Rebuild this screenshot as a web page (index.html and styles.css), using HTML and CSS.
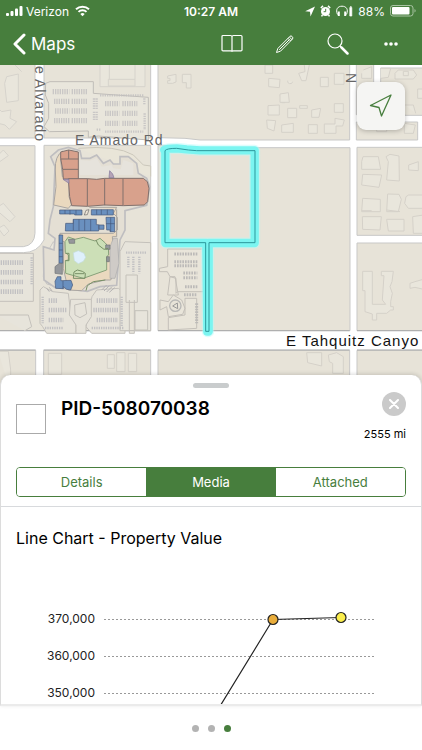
FILE: index.html
```html
<!DOCTYPE html>
<html lang="en">
  <head>
    <meta charset="utf-8">
    <meta name="viewport" content="width=device-width, initial-scale=1">
    <link rel="stylesheet" href="styles.css">
    <title>Maps</title>
  </head>
  <body>
    <header class="top-bar">
      <div class="status-row">
        <div class="status-left">
          <svg width="17" height="12" viewBox="0 0 17 12" fill="#fff"><rect x="0" y="8" width="3" height="3" rx="1"/><rect x="4.500" y="6" width="3" height="5" rx="1"/><rect x="9" y="3.500" width="3" height="7.500" rx="1"/><rect x="13.500" y="1" width="3" height="10" rx="1"/></svg>
          <span>Verizon</span>
          <svg class="wifi" width="15" height="12" viewBox="0 0 15 12" fill="none" stroke="#fff" stroke-width="2"><path d="M1 4.200a9.500 9.500 0 0 1 13 0M3.500 6.900a5.800 5.800 0 0 1 8 0"/><path d="M5.300 9a3.300 3.300 0 0 1 4.400 0L7.500 11.300z" fill="#fff" stroke="none"/></svg>
        </div>
        <div class="status-time">10:27 AM</div>
        <div class="status-right">
          <svg width="10" height="11" viewBox="0 0 10 11" fill="#fff"><path d="M10 .5L5.500 10.500 5 5.800.2 5.300z"/></svg>
          <svg width="11" height="12" viewBox="0 0 11 12"><circle cx="5.500" cy="6.500" r="4.500" fill="#fff"/><path d="M.8 3L3 .9M10.200 3L8 .9M2.500 10l-1 1.400M8.500 10l1 1.400" stroke="#fff" stroke-width="1.500"/><path d="M5.700 3.800v2.900H3.600" fill="none" stroke="#477e3d"/></svg>
          <svg width="17" height="12" viewBox="0 0 17 12" fill="none" stroke="#fff"><path d="M1.500 9.500C-.8 4 2 1.200 6 1.200S12.800 4 10.500 9.500"/><path d="M2.800 6.500v4.500M9.200 6.500v4.500" stroke-width="2"/><path d="M13.800 2.500h2v8.500h-2zM14 1.500h1.600" fill="#fff" stroke-opacity=".7"/></svg>
          <span>88%</span>
          <svg width="26" height="12" viewBox="0 0 26 12"><rect x=".5" y=".5" width="22.500" height="10.500" rx="2.500" fill="none" stroke="#a9c3a3"/><rect x="2" y="2" width="17.500" height="7.500" rx="1" fill="#fff"/><path d="M24.500 4c1.500.5 1.500 3 0 3.500z" fill="#a9c3a3"/></svg>
        </div>
      </div>
      <nav class="nav-row">
        <a class="back-link" href="#">
          <svg width="13" height="22" viewBox="0 0 13 22" fill="none" stroke="#fff" stroke-width="3" stroke-linecap="round" stroke-linejoin="round"><path d="M11 2L2 11l9 9"/></svg>
          Maps
        </a>
        <button class="nav-button" aria-label="Bookmarks">
          <svg width="22" height="20" viewBox="0 0 22 20" fill="none" stroke="#fff" stroke-width="1.200"><path d="M1 2.500Q1 1.500 2 1.500h7.500q1.500 0 1.500 1.300 0-1.300 1.500-1.300H20q1 0 1 1v13.500q0 .8-1 .8h-7.500q-1.300 0-1.500.8-.2-.8-1.500-.8H2q-1 0-1-.8zM11 2.500v15"/></svg>
        </button>
        <button class="nav-button" aria-label="Sketch">
          <svg width="20" height="20" viewBox="0 0 20 20" fill="none" stroke="#fff" stroke-linejoin="round"><path d="M1.500 18.500L2.800 14.500 15 2.300Q16 1.300 17.200 2.600T17.500 5L5.500 17.200zM13 4.300l2.700 2.700M14.300 3l2.700 2.700M4.200 15.800L14.300 5.700"/></svg>
        </button>
        <button class="nav-button" aria-label="Search">
          <svg width="22" height="22" viewBox="0 0 22 22" fill="none" stroke="#fff"><circle cx="8" cy="8" r="7" stroke-width="1.200"/><path d="M13 13l1.500 1.500" stroke-width="1.500"/><path d="M14.500 14.500l6 6" stroke-width="2.500" stroke-linecap="round"/></svg>
        </button>
        <button class="nav-button" aria-label="More">
          <svg width="14" height="4" viewBox="0 0 14 4" fill="#fff"><circle cx="2" cy="2" r="1.800"/><circle cx="7" cy="2" r="1.800"/><circle cx="12" cy="2" r="1.800"/></svg>
        </button>
      </nav>
    </header>

    <main>
      <div class="map">
        <svg class="map-svg" viewBox="0 65 422 324">
          <rect y="60" width="422" height="340" fill="#fff"/>
          <g transform="translate(0 60) scale(.33333)">
            <!-- city blocks -->
            <g fill="#e7e3d8" stroke="#c8c8c7" stroke-width="3">
              <path d="M-9 0H105V234H-9zM132 0H452V234H132zM474 0H1049V240H600L555 235 474 233zM-9 257H105V520Q103 556 70 560H-9z"/>
              <path d="M132 256H452V812H-9V578H70Q112 578 132 540zM474 256H520Q545 257 570 263H1050V812H474zM1071 262H1290V526H1071zM1071 549H1290V812H1071z"/>
              <path d="M1069 0H1121V164H1069zM1142 24H1290V166H1215V164H1142zM1069 186H1253V240H1069z"/>
              <path d="M-9 871H107V1000H-9zM131 871H452V1000H131zM474 871H1049V1000H474zM1071 871H1290V1000H1071z"/>
            </g>
            <path d="M-9 812H452M474 812H1049M1071 812H1290M-9 870H107M131 870H452M474 870H1049M1071 870H1290" stroke="#aaa" stroke-width="3"/>

            <!-- north west -->
            <g fill="#e9e6dc" stroke="#d6d3cc" stroke-width="3">
              <path d="M20 50L55 42V122L20 127 14 70zM-5 145L5 155 33 150 30 175 50 185 28 208 15 195-5 190zM45 15L65 35M-5 285L10 270 25 287-5 308zM300 0V80H435V0M325 58H405V78H325zM328 0V58M405 0V58"/>
              <path d="M-5 440L10 430 45 470 30 485-5 455M-5 505L12 495 27 513 12 528z"/>
              <path d="M137 70L150 65H280V100L445 112V240L295 228 265 232V213L148 215 132 200 146 175V130L136 105z" stroke="#c0bdb8"/>
              <path d="M132 595L160 545 170 560 165 605 180 650 170 680 140 672 130 650z" stroke="#c8c6c3"/>
            </g>
            <g stroke="#c2c0c1" stroke-dasharray="4 3" fill="none" opacity=".8">
              <path stroke-width="16" d="M158 95H208M215 95H262M162 124H208M215 124H262M165 153H208M215 153H262M162 182H208M215 182H262M315 131H358M367 131H412M315 160H358M367 160H412M315 190H358M367 190H412"/>
              <path stroke-width="7" d="M300 106H430M315 215H430M290 209H302M282 115V150M290 115V150M282 155V183M290 155V183M433 115V135M434 160V210"/>
            </g>

            <!-- museum grounds -->
            <path d="M235 265Q350 255 400 285L430 315 452 318V350" fill="#e9e5d8" stroke="#cbc7bb" stroke-width="3"/>
            <path d="M160 440L150 480 145 520 165 535 162 570 130 560 132 660 165 682 262 694 300 680 350 676 360 540 375 510V452L440 436 449 380 440 355 415 340 410 310 385 290H360V312H340L330 300 310 310 290 285 270 295H245L240 272 205 262 175 270 152 290 165 320z" fill="#e4dfd4" stroke="#bfbec0" stroke-width="5"/>
            <path d="M240 300L270 302 290 294 305 320 335 315 340 325 362 328 370 300 400 310V345H240z" fill="#e6e3dc"/>
            <path d="M188 273Q164 288 166 330L168 380 161 435 205 445 215 433 207 410V356L187 350 182 300zM268 442H350L340 460 352 472V510L340 520H180V540L192 545 190 625 205 690 245 692 265 672 315 660 332 660 345 635 337 530H350V448" fill="#ead9bf" stroke="#aaa6a2" stroke-width="3"/>
            <path d="M352 535L357 610 345 655 330 655 330 560 340 535z" fill="#cfcbc7" stroke="#aaa" stroke-width="2"/>
            <g fill="#d8a18c" stroke="#81706c" stroke-width="3">
              <path d="M182 295V276L206 270 235 276V357H190L188 328zM182 297H235M206 270V297M188 328H235"/>
              <path d="M205 356H262L290 358 314 355H430L442 365 447 385 443 425 433 435 370 437 313 435 262 439 215 437 209 410zM262 356V438M314 356V436M369 356V436"/>
            </g>
            <path d="M327 353L329 332 338 342 342 353zM189 358H207V370z" fill="#b5a3b7" stroke="#81769a" stroke-width="2"/>
            <g fill="#6a90bf" stroke="#45577a" stroke-width="2">
              <path d="M179 450H246V465H224V462H179zM195 450V462M210 450V464M228 450V464M274 449H340V465H274zM290 449V464M304 449V464M322 449V464M318 472H344V515H330V510H320zM318 491H344M332 472V514"/>
              <path d="M197 490H220V478H289V494H296V513H196zM220 478V511M237 478V512M254 478V512M272 478V513M297 495H312V508H297z"/>
              <path d="M177 525H188V610H177zM177 550H188M177 570H188M177 590H188M165 664L172 650H183V662L213 661 218 675 212 690 200 688 190 680V686L167 685zM189 663V686"/>
            </g>
            <path d="M258 451L267 449 262 464 253 465z" fill="#eee5d8" stroke="#666" stroke-width="2"/>
            <path d="M205 531L225 538 250 532 285 543 300 535 315 548 325 560 326 585 320 590V630L250 655 197 640 196 602 205 600V585L196 578 195 545z" fill="#ccdfb7" stroke="#87a179" stroke-width="3"/>
            <path d="M220 578L235 572 252 580 257 592 250 604 235 611 223 602z" fill="#dff0fc" stroke="#c4dddf" stroke-width="2"/>
            <path d="M165 620L178 610H187V643L165 640zM205 538H224V550H208zM317 555H330V568H317zM320 590H328V605H320z" fill="#95979b" stroke="#707376" stroke-width="2"/>
            <path d="M196 580H207V602H196M222 636L232 630 247 634 256 640 255 655H220zM225 641H253M288 540L295 555 312 568 325 565M258 692L262 677 280 665 316 660" fill="none" stroke="#779066" stroke-width="3"/>

            <!-- lots south of the museum -->
            <g fill="#e7e4db" stroke="#c4c1bb" stroke-width="3">
              <path d="M-9 580H100V724H-9M120 690L130 680 158 695 205 700 212 760 228 790V820H140L128 800 120 790zM276 710L290 690 355 685 375 700V820H275L258 800z"/>
              <path d="M212 718H274V770L258 795V820H228V795L208 765zM224 735L255 728 260 762 240 773 225 765zM360 575L375 545 452 548V812H360zM378 645H412V727H378zM405 752H443V810H405zM388 720V820H403V720M-9 765H85L95 800 75 812"/>
            </g>
            <g stroke="#bfbec1" stroke-dasharray="4 3" fill="none" opacity=".9">
              <path stroke-width="14" d="M2 608H72M2 637H72M2 666H72M2 695H72M146 722H174M146 750H200M146 780H190M290 722H354M280 750H354M290 780H354"/>
              <path stroke-width="7" d="M95 592V675M135 804H190M275 804H370M128 710V790M365 710V800M378 578H440M385 590V625M400 590V640M418 590V640"/>
            </g>
            <path d="M305 690L320 675M312 693L328 677M320 696L336 680M328 697L344 683M140 685L148 695M148 682L157 694" stroke="#b5b3b4" stroke-width="3"/>

            <!-- church lot beside the parcel -->
            <g fill="#e9e5da" stroke="#c4c0b9" stroke-width="3">
              <path d="M503 567H610V695H533L528 700V655L510 650 502 635H478V625L503 620zM510 650H525L535 705H503z"/>
              <path d="M480 720L505 725 520 705 545 720 555 745 548 763 505 770 500 740 480 750zM505 773L555 765V715H590V805L505 810z"/>
            </g>
            <path d="M523 582H592M523 605H592M523 617H592M550 639H592M550 653H592M555 680H592M552 704H592M590 730V790" stroke="#bcbab8" stroke-width="9" stroke-dasharray="5 3"/>
            <circle cx="526" cy="737" r="17" fill="#e7e3d8" stroke="#b8b8b6" stroke-width="4"/>
            <path d="M518 738L532 729 533 746z" fill="none" stroke="#999" stroke-width="3"/>

            <!-- houses -->
            <g fill="#e9e6dc" stroke="#d5d1c9" stroke-width="3">
              <path d="M503 48L528 43V66L518 70H503V62H510V55H503zM547 43H573V84H559V68H547zM795 15H818V40H795zM806 55L840 58 838 83 806 80zM840 105L855 100V128H845zM804 137L838 135V165H804zM800 180L827 182 822 213 802 205z"/>
              <path d="M896 40L915 35 912 5H930L918 62H905zM961 52H985V80H961zM1003 40H1032V73H1003zM840 102L865 98 868 127H840zM863 145H890V173H863zM899 137H922V145H899zM935 150L962 145 957 172H935zM1003 131H1030V157H1003zM845 195L880 190V217H845zM925 194H952V220H925zM973 192H1005V175L1033 180 1028 198H1008V220H973zM863 62A7 7 0 1 0 878 65"/>
              <path d="M1090 30L1115 20V55H1085V40M1142 25H1172L1165 52 1142 55M1185 40L1195 30 1240 30 1250 45 1240 57H1185zM1210 34H1225V47H1210zM1253 87H1275V115H1253zM1215 135H1240L1247 160M1130 190H1160V215H1130zM1213 190L1246 195 1240 220H1213z"/>
              <path d="M1089 290H1135L1142 328H1085V305zM1088 343L1145 345 1137 382 1085 375zM1165 305L1158 290 1170 283 1197 288 1198 363L1160 360zM1226 315L1255 305V332L1226 330zM1088 415L1141 418V455H1085zM1163 402L1197 403 1204 418 1195 455H1160zM1218 410L1226 405H1290V445H1225L1214 430zM1087 470H1144L1140 510 1088 508zM1160 478H1212V513H1165zM1238 470L1290 462V520H1240zM1085 452H1115M1160 450L1200 455"/>
              <path d="M1088 634H1117V733H1157L1147 720 1152 647H1144V634H1180L1176 665 1170 680 1177 700 1172 725V740H1180V750H1172L1160 760H1130V780H1117V762L1095 755V692H1088zM1245 665L1280 655V690L1245 682L1230 685V670zM920 878H965V918L923 908zM985 885L1010 878 1030 890V940H998V910L988 905z"/>
              <path d="M-5 874H25L32 930V1000M145 880H185V943H145zM322 884H343V925H322zM350 878H375V935H350zM385 880H410V935H385z"/>
            </g>

            <!-- selected parcel -->
            <path d="M493 270Q500 265 530 265L560 268 600 271H764V549H626V815H622L619 549H496V275Z" fill="none" stroke="#b6fbfa" stroke-width="33" stroke-linejoin="round" opacity=".45"/>
            <path d="M493 270Q500 265 530 265L560 268 600 271H764V549H626V815H622L619 549H496V275Z" fill="none" stroke="#7bf5f1" stroke-width="25" stroke-linejoin="round"/>
            <path d="M495 272Q500 265 530 265L565 270 590 272H765V548H627V814H617V548H495Z" fill="none" stroke="#2b979c" stroke-width="3"/>
          </g>
          <g class="map-label">
            <text x="75" y="145">E Amado Rd</text>
            <text transform="translate(35 66) rotate(90)">e Alvarado</text>
            <text transform="translate(346 73) rotate(90)">N</text>
          </g>
          <text class="map-label main-street" x="286" y="346">E Tahquitz Canyo</text>
        </svg>
        <button class="locate-button" aria-label="My location">
          <svg width="24" height="24" viewBox="0 0 24 24" fill="none" stroke="#477e3d" stroke-width="1.300" stroke-linejoin="round"><path d="M22 1L1.500 11.500 10 13.500 12.500 22z"/></svg>
        </button>
      </div>

      <section class="sheet">
        <div class="handle"></div>
        <div class="sheet-head">
          <input class="symbol" type="checkbox" id="parcel">
          <label class="parcel-title" for="parcel">PID-508070038</label>
          <div class="head-side">
            <button class="close-button" aria-label="Close">
              <svg width="10" height="10" viewBox="0 0 10 10" stroke="#fff" stroke-width="2" stroke-linecap="round"><path d="M1 1l8 8M9 1L1 9"/></svg>
            </button>
            <span class="distance">2555 mi</span>
          </div>
        </div>
        <div class="segments">
          <button class="segment">Details</button>
          <button class="segment active">Media</button>
          <button class="segment">Attached</button>
        </div>
        <div class="media">
          <h2 class="chart-title">Line Chart - Property Value</h2>
          <svg class="chart" viewBox="1 549 420 155">
            <path class="grid-line" d="M104 619.500H376M104 656.500H376M104 693.500H376"/>
            <g class="axis-label">
              <text x="95" y="623">370,000</text>
              <text x="95" y="660">360,000</text>
              <text x="95" y="697">350,000</text>
            </g>
            <path d="M214 716L273 619.500 341 617.500" fill="none" stroke="#222" stroke-width="1.200"/>
            <circle cx="273" cy="619.500" r="5" fill="#e9ad3b" stroke="#222" stroke-width="1.200"/>
            <circle cx="341" cy="617.500" r="5" fill="#fbee4c" stroke="#222" stroke-width="1.200"/>
          </svg>
        </div>
      </section>
    </main>

    <footer class="pager">
      <span class="dot"></span>
      <span class="dot"></span>
      <span class="dot current"></span>
    </footer>
  </body>
</html>
```

FILE: styles.css
```css
body {
  margin: 0;
  font-family: Inter, "Liberation Sans", sans-serif;
  background-color: white;
  color: black;
}

button {
  border: none;
  padding: 0;
  font-family: inherit;
  cursor: pointer;
}

svg {
  display: block;
}

.top-bar {
  background-color: #477e3d;
  color: white;
}

.status-row {
  display: grid;
  grid-template-columns: 1fr auto 1fr;
  align-items: center;
  height: 22px;
  padding: 0 6px;
  font-size: 12px;
}

.status-left,
.status-right {
  display: flex;
  align-items: center;
  gap: 3px;
}

.status-right {
  justify-content: flex-end;
  gap: 5px;
}

.wifi {
  margin-left: 3px;
}

.status-time {
  font-weight: 600;
}

.nav-row {
  display: flex;
  align-items: center;
  height: 43px;
  padding: 0 5px 0 13px;
}

.back-link {
  display: flex;
  align-items: center;
  gap: 5px;
  margin-right: auto;
  color: white;
  font-size: 17px;
  text-decoration: none;
}

.nav-button {
  display: flex;
  align-items: center;
  justify-content: center;
  width: 53px;
  height: 43px;
  background: none;
}

.map {
  position: relative;
}

.map-svg {
  width: 100%;
  height: auto;
}

.map-label {
  font-family: "Liberation Sans", Arial, sans-serif;
  font-size: 14px;
  letter-spacing: 1px;
  fill: #666;
}

.main-street {
  font-size: 15px;
  fill: #111;
}

.locate-button {
  position: absolute;
  top: 17px;
  right: 17px;
  display: flex;
  align-items: center;
  justify-content: center;
  width: 48px;
  height: 48px;
  border-radius: 9px;
  background-color: #f5f5f3;
  box-shadow: 0 1px 5px rgba(0, 0, 0, 0.25);
}

.sheet {
  position: relative;
  margin-top: -14px;
  padding-top: 8px;
  border: solid #dcdcdc;
  border-width: 0 1px 2px;
  border-bottom-color: #ebebeb;
  border-radius: 10px 10px 0 0;
  background-color: white;
  box-shadow: 0 -1px 4px rgba(0, 0, 0, 0.15);
}

.handle {
  width: 36px;
  height: 5px;
  margin: 0 auto;
  border-radius: 3px;
  background-color: #c9cccd;
}

.sheet-head {
  display: flex;
  align-items: flex-start;
  gap: 15px;
  padding: 0 15px;
}

.symbol {
  appearance: none;
  width: 30px;
  height: 30px;
  margin: 16px 0 0;
  border: 1px solid #aaa;
}

.parcel-title {
  margin-top: 9px;
  font-size: 19px;
  line-height: 24px;
  font-weight: 600;
}

.head-side {
  display: flex;
  flex-direction: column;
  align-items: flex-end;
  gap: 9px;
  margin: 4px 0 0 auto;
}

.close-button {
  display: flex;
  align-items: center;
  justify-content: center;
  width: 24px;
  height: 24px;
  border-radius: 50%;
  background-color: #cacaca;
}

.distance {
  font-size: 11px;
  line-height: 18px;
}

.segments {
  display: grid;
  grid-template-columns: 1fr 1fr 1fr;
  margin: 24px 15px 9px;
  border: 1px solid #477e3d;
  border-radius: 4px;
  overflow: hidden;
}

.segment {
  height: 28px;
  background-color: white;
  color: #477e3d;
  font-size: 13px;
}

.segment.active {
  background-color: #477e3d;
  color: white;
}

.media {
  border-top: 1px solid #d8dadd;
}

.chart-title {
  margin: 0;
  padding: 20px 15px 0;
  font-size: 16px;
  line-height: 22px;
  font-weight: 400;
}

.chart {
  width: 100%;
  height: auto;
}

.grid-line {
  stroke: #999;
  stroke-dasharray: 2 2;
}

.axis-label {
  font-size: 12px;
  text-anchor: end;
  fill: #222;
}

.pager {
  display: flex;
  align-items: center;
  justify-content: center;
  gap: 9px;
  height: 44px;
}

.dot {
  width: 7px;
  height: 7px;
  border-radius: 50%;
  background-color: #b3b3b3;
}

.dot.current {
  background-color: #477e3d;
}
```
